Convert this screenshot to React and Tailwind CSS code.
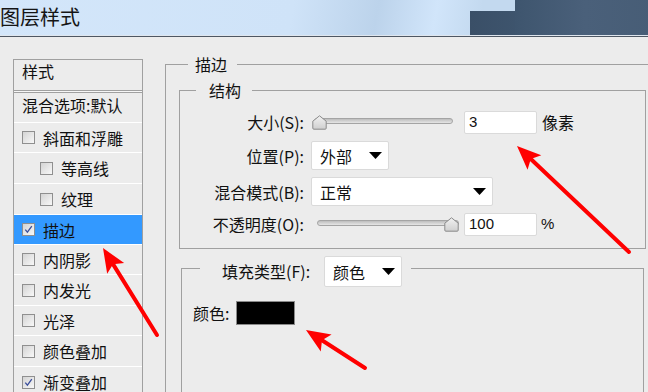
import React from 'react';

const Checkbox = ({ checked }) => (
  <div className="w-[13px] h-[13px] shrink-0 border border-[#8f8f8f] bg-gradient-to-br from-[#d4d4d4] to-[#f8f8f8] flex items-center justify-center">
    {checked && (
      <svg width="9" height="9" viewBox="0 0 9 9">
        <path d="M1.3 4.6 L3.4 7.2 L7.8 1.2" fill="none" stroke="#3b4f9c" strokeWidth="1.3" />
      </svg>
    )}
  </div>
);

const DropArrow = () => (
  <svg width="13" height="7" viewBox="0 0 13 7" className="shrink-0">
    <path d="M0 0h13L6.5 7z" fill="#000" />
  </svg>
);

const Dropdown = ({ text, w, h }) => (
  <div className={`flex items-center justify-between bg-white border border-[#dadada] rounded-[2px] pl-[8px] pr-[6px] ${w} ${h}`}>
    <span className="text-[16px] leading-[20px]">{text}</span>
    <DropArrow />
  </div>
);

const Thumb = () => (
  <svg width="15" height="15" viewBox="0 0 15 15">
    <defs>
      <linearGradient id="tg" x1="0" y1="0" x2="0" y2="1">
        <stop offset="0" stopColor="#f2f2f2" />
        <stop offset="1" stopColor="#cfcfcf" />
      </linearGradient>
    </defs>
    <path d="M7.5 0.8 L14.2 6.2 V13.2 Q14.2 14.2 13.2 14.2 H1.8 Q0.8 14.2 0.8 13.2 V6.2 Z" fill="url(#tg)" stroke="#8a8a8a" strokeWidth="1" />
  </svg>
);

const Slider = ({ w, thumbRight }) => (
  <div className={`relative h-[15px] ${w}`}>
    <div className="absolute left-[2px] right-0 top-[3px] h-[6px] rounded-full border border-[#a4a4a4] bg-gradient-to-b from-[#bdbdbd] to-[#e6e6e6]" />
    <div className={`absolute top-0 ${thumbRight ? 'right-0' : 'left-0'}`}>
      <Thumb />
    </div>
  </div>
);

const Input = ({ value }) => (
  <div className="w-[73px] h-[23px] bg-white border border-[#dadada] rounded-[2px] pl-[4px] flex items-center font-['Liberation_Sans',sans-serif] text-[15px]">
    {value}
  </div>
);

const rows = [
  { t: '斜面和浮雕', h: 'h-[30px]' },
  { t: '等高线', h: 'h-[31px]', indent: true },
  { t: '纹理', h: 'h-[31px]', indent: true },
  { t: '描边', h: 'h-[30px]', checked: true, selected: true },
  { t: '内阴影', h: 'h-[30px]' },
  { t: '内发光', h: 'h-[31px]' },
  { t: '光泽', h: 'h-[30px]' },
  { t: '颜色叠加', h: 'h-[31px]' },
  { t: '渐变叠加', h: 'h-[31px]', checked: true },
];

function arrow(x1, y1, x2, y2) {
  const dx = x2 - x1, dy = y2 - y1, L = Math.hypot(dx, dy);
  const ux = dx / L, uy = dy / L;
  const hl = 24, hw = 10;
  const bx = x2 - ux * hl, by = y2 - uy * hl;
  const px = -uy, py = ux;
  const nx = bx + ux * 5, ny = by + uy * 5;
  return {
    line: [x1, y1, nx, ny],
    head: `${x2},${y2} ${bx + px * hw},${by + py * hw} ${nx},${ny} ${bx - px * hw},${by - py * hw}`,
  };
}

const arrows = [
  arrow(629, 252, 517, 146),
  arrow(157, 335, 103, 248),
  arrow(365, 368, 306, 330),
];

export default function App() {
  return (
    <div className="relative w-[648px] h-[392px] overflow-hidden bg-[#ececec] text-[#111] font-['Noto_Sans_CJK_SC','Noto_Sans',sans-serif]">
      {/* title bar */}
      <div className="relative h-[35px] overflow-hidden bg-[linear-gradient(100deg,#d3e6fa_0%,#cfe3f8_45%,#bcd3eb_58%,#d1e5fa_67%,#c3d9ef_74%)]">
        <div className="absolute left-[470px] top-[11px] w-[60px] h-[30px] bg-gradient-to-r from-[#3a4f67] to-[#3f566f]" />
        <div className="absolute left-[515px] top-0 w-[140px] h-[40px] bg-gradient-to-r from-[#3e556e] via-[#4a607a] to-[#475d76]" />
        <span className="relative block text-[20px] leading-[33px] text-[#151515]">图层样式</span>
      </div>
      <div className="h-px bg-[#dfe6ee]" />
      <div className="h-px bg-[#4e5763]" />

      <div className="flex">
        {/* left list */}
        <div className="ml-[13px] mt-[22px] w-[130px] h-[400px] shrink-0 border border-[#a0a0a0] text-[16px]">
          <div className="h-[31px] border-b border-[#a0a0a0] pl-[8px] pb-[8px] flex items-center">样式</div>
          <div className="h-px bg-[#f7f7f7]" />
          <div className="h-[31px] border-t border-[#a0a0a0] border-b border-b-white pl-[8px] pb-[6px] flex items-center whitespace-nowrap">混合选项:默认</div>
          {rows.map((r) => (
            <div
              key={r.t}
              className={`${r.h} border-b border-white flex items-center gap-[8px] ${r.indent ? 'pl-[26px]' : 'pl-[8px]'} ${r.selected ? 'bg-[#3399ff]' : ''}`}
            >
              <Checkbox checked={r.checked} />
              <span className="leading-[20px]">{r.t}</span>
            </div>
          ))}
        </div>

        {/* right panel */}
        <fieldset className="ml-[22px] mt-[18px] w-[520px] h-[400px] shrink-0 border-l border-t border-[#a0a0a0]">
          <legend className="ml-[22px] pl-[7px] pr-[10px] text-[16px] leading-[18px]">描边</legend>

          <fieldset className="ml-[13px] mt-[9px] w-[467px] border border-[#a0a0a0] pb-[12px]">
            <legend className="ml-[16px] pl-[13px] pr-[11px] text-[16px] leading-[16px]">结构</legend>
            <div className="flex flex-col text-[16px]">
              <div className="mt-[12px] h-[24px] flex items-center">
                <div className="w-[124px] text-right">大小(S):</div>
                <div className="ml-[8px]"><Slider w="w-[141px]" /></div>
                <div className="ml-[11px]"><Input value="3" /></div>
                <span className="ml-[5px]">像素</span>
              </div>
              <div className="mt-[7px] h-[29px] flex items-center">
                <div className="w-[124px] text-right">位置(P):</div>
                <div className="ml-[7px]"><Dropdown text="外部" w="w-[78px]" h="h-[29px]" /></div>
              </div>
              <div className="mt-[7px] h-[29px] flex items-center">
                <div className="w-[124px] text-right">混合模式(B):</div>
                <div className="ml-[7px]"><Dropdown text="正常" w="w-[182px]" h="h-[29px]" /></div>
              </div>
              <div className="mt-[6px] h-[24px] flex items-center">
                <div className="w-[124px] text-right">不透明度(O):</div>
                <div className="ml-[11px]"><Slider w="w-[144px]" thumbRight /></div>
                <div className="ml-[5px]"><Input value="100" /></div>
                <span className="ml-[4px] font-['Liberation_Sans',sans-serif] text-[15px]">%</span>
              </div>
            </div>
          </fieldset>

          <fieldset className="ml-[15px] mt-[7px] w-[463px] h-[200px] border-l border-t border-r border-[#a0a0a0]">
            <legend className="ml-[18px] pl-[22px] pr-[9px] h-[24px]">
              <div className="flex items-start text-[16px]">
                <span className="mt-[5px] leading-[20px]">填充类型(F):</span>
                <div className="ml-[14px]"><Dropdown text="颜色" w="w-[78px]" h="h-[31px]" /></div>
              </div>
            </legend>
            <div className="mt-[21px] pl-[11px] flex items-center text-[16px]">
              <span>颜色:</span>
              <div className="ml-[7px] w-[59px] h-[24px] border border-[#8a8a8a] bg-black" />
            </div>
          </fieldset>
        </fieldset>
      </div>

      {/* red annotation arrows */}
      <svg className="absolute inset-0 pointer-events-none" width="648" height="392" viewBox="0 0 648 392">
        {arrows.map((a, i) => (
          <g key={i}>
            <line x1={a.line[0]} y1={a.line[1]} x2={a.line[2]} y2={a.line[3]} stroke="#ff0000" strokeWidth="4" strokeLinecap="round" />
            <polygon points={a.head} fill="#ff0000" />
          </g>
        ))}
      </svg>
    </div>
  );
}
